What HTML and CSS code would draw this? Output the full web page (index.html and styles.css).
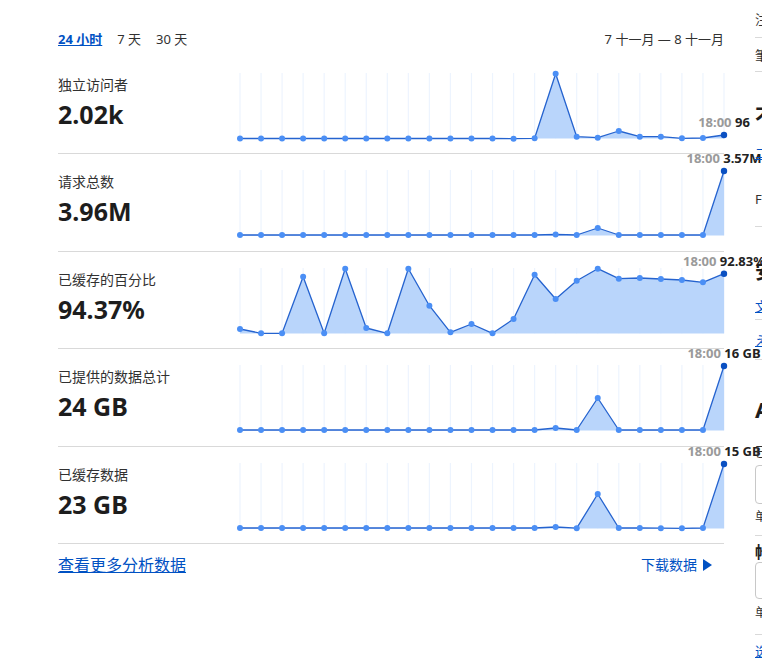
FILE: index.html
```html
<!DOCTYPE html>
<html lang="zh">
<head>
    <meta charset="UTF-8">
    <title>分析</title>
    <link rel="stylesheet" href="styles.css">
</head>
<body>
    <div class="page">
        <div class="main">
            <div class="range-bar">
                <div class="range-tabs">
                    <a class="tab active">24 小时</a>
                    <a class="tab">7 天</a>
                    <a class="tab">30 天</a>
                </div>
                <div class="range-dates">7 十一月 — 8 十一月</div>
            </div>

            <div class="stat-row">
                <div class="stat-text">
                    <div class="stat-label">独立访问者</div>
                    <div class="stat-value">2.02k</div>
                </div>
                <svg class="chart" id="chart0"></svg>
            </div>
            <div class="stat-row">
                <div class="stat-text">
                    <div class="stat-label">请求总数</div>
                    <div class="stat-value">3.96M</div>
                </div>
                <svg class="chart" id="chart1"></svg>
            </div>
            <div class="stat-row">
                <div class="stat-text">
                    <div class="stat-label">已缓存的百分比</div>
                    <div class="stat-value">94.37%</div>
                </div>
                <svg class="chart" id="chart2"></svg>
            </div>
            <div class="stat-row">
                <div class="stat-text">
                    <div class="stat-label">已提供的数据总计</div>
                    <div class="stat-value">24 GB</div>
                </div>
                <svg class="chart" id="chart3"></svg>
            </div>
            <div class="stat-row">
                <div class="stat-text">
                    <div class="stat-label">已缓存数据</div>
                    <div class="stat-value">23 GB</div>
                </div>
                <svg class="chart" id="chart4"></svg>
            </div>

            <div class="footer-bar">
                <a class="more-link">查看更多分析数据</a>
                <a class="download-link">下载数据 <span class="arrow"></span></a>
            </div>
        </div>

        <div class="sidebar">
            <div class="s-row first">注册与登录</div>
            <div class="s-row second">筆记与设置</div>
            <div class="s-card card-a">
                <h3 class="s-title">不可用模式</h3>
                <a class="s-link link-a">二级域名</a>
                <p class="s-text text-a">Free 计划</p>
            </div>
            <div class="s-card card-b">
                <h3 class="s-title">安全性</h3>
                <a class="s-link link-b">文档</a>
            </div>
            <div class="s-row third"><a class="s-link">え了解更多</a></div>
            <div class="s-card card-c">
                <h3 class="s-title big">API</h3>
                <div class="s-text label-c">已分配的区域 ID</div>
                <div class="s-input"></div>
                <div class="s-small">单击复制</div>
            </div>
            <div class="s-card card-d">
                <h4 class="s-subtitle">帐户 ID</h4>
                <div class="s-input short"></div>
                <div class="s-small">单击复制</div>
            </div>
            <div class="s-last"><a class="s-link">选择 API 令牌</a></div>
        </div>
    </div>

    <script>
        // 每个图表的点（相对 y 坐标，0 顶部，65.5 底部）
        var charts = [
            { label: '96', ys: [65.5,65.5,65.5,65.5,65.5,65.5,65.5,65.5,65.5,65.5,65.5,65.5,65.5,65.7,65.3,0.7,63.7,64.7,58,63.7,63.7,65.3,65,62] },
            { label: '3.57M', ys: [65,65,65,65,65,65,65,65,65,65,65,65,65,65,65,64.5,65,58,65,65,65,65,65,1] },
            { label: '92.83%', ys: [61,65.3,65.3,8.7,65.3,0.7,60,65.3,0.7,37.7,64.3,56,65.3,51,6.7,31,12.7,0.7,10.7,10,11,12,14.3,5.7] },
            { label: '16 GB', ys: [65,65,65,65,65,65,65,65,65,65,65,65,65,65,65,63,65,33,65,65,65,65,65,1] },
            { label: '15 GB', ys: [65,65,65,65,65,65,65,65,65,65,65,65,65,65,65,64,65.2,31,65,65,65.2,65.3,65,1] }
        ];

        var NS = 'http://www.w3.org/2000/svg';
        var BASE = 65.5;

        function el(name, attrs) {
            var node = document.createElementNS(NS, name);
            for (var k in attrs) node.setAttribute(k, attrs[k]);
            return node;
        }

        function drawChart(svg, data) {
            var step = 484 / 23;
            var pts = data.ys.map(function(y, i) { return [4 + i * step, y]; });

            pts.forEach(function(p) {
                svg.appendChild(el('line', { x1: p[0], y1: 0, x2: p[0], y2: BASE, 'class': 'grid' }));
            });

            var line = pts.map(function(p) { return p[0].toFixed(2) + ',' + p[1]; }).join(' ');
            var area = pts[0][0] + ',' + BASE + ' ' + line + ' ' + pts[pts.length - 1][0] + ',' + BASE;
            svg.appendChild(el('polygon', { points: area, 'class': 'area' }));
            svg.appendChild(el('polyline', { points: line, 'class': 'line' }));

            pts.forEach(function(p, i) {
                var last = i === pts.length - 1;
                svg.appendChild(el('circle', { cx: p[0], cy: p[1], r: last ? 3.2 : 3, 'class': last ? 'dot last' : 'dot' }));
            });

            var lp = pts[pts.length - 1];
            var text = el('text', { x: lp[0], y: lp[1] - 8, 'class': 'tip' });
            var t1 = el('tspan', { 'class': 'tip-time' });
            t1.textContent = '18:00';
            var t2 = el('tspan', { 'class': 'tip-value' });
            t2.textContent = ' ' + data.label;
            text.appendChild(t1);
            text.appendChild(t2);
            svg.appendChild(text);
        }

        charts.forEach(function(c, i) {
            drawChart(document.getElementById('chart' + i), c);
        });
    </script>
</body>
</html>
```

FILE: styles.css
```css
html, body {
    margin: 0;
    padding: 0;
    background: #fff;
    overflow: hidden;
}
body {
    font-family: 'Noto Sans', 'Noto Sans CJK SC', sans-serif;
    color: #313131;
    font-size: 13px;
}
a {
    cursor: pointer;
}
.page {
    display: flex;
    width: 1100px;
}
.main {
    width: 666px;
    margin-left: 58px;
    flex-shrink: 0;
}
.range-bar {
    display: flex;
    justify-content: space-between;
    align-items: center;
    padding-top: 30px;
    height: 26.5px;
    line-height: 18px;
}
.range-tabs {
    display: flex;
    gap: 15px;
    align-self: flex-start;
}
.tab {
    color: #313131;
}
.tab.active {
    color: #0051c3;
    font-weight: bold;
    text-decoration: underline;
}
.range-dates {
    align-self: flex-start;
    color: #313131;
}
.stat-row {
    display: grid;
    grid-template-columns: 178px 488px;
    padding: 16px 0 14.5px;
    border-bottom: 1px solid #d9d9d9;
}
.stat-label {
    margin-top: 3px;
    font-size: 14px;
    line-height: 18px;
    color: #313131;
}
.stat-value {
    margin-top: 5px;
    font-size: 25px;
    font-weight: bold;
    line-height: 30px;
    color: #1d1d1d;
}
.chart {
    width: 488px;
    height: 66px;
    overflow: visible;
    display: block;
}
.chart .grid {
    stroke: #edf4fe;
    stroke-width: 1.2;
}
.chart .area {
    fill: #b9d5fb;
}
.chart .line {
    fill: none;
    stroke: #2563cf;
    stroke-width: 1.3;
    stroke-linejoin: round;
}
.chart .dot {
    fill: #4b8ff5;
}
.chart .dot.last {
    fill: #0a50c2;
}
.chart .tip {
    font-family: 'Noto Sans', sans-serif;
    font-size: 13px;
    font-weight: bold;
    text-anchor: middle;
}
.chart .tip-time {
    fill: #9a9a9a;
}
.chart .tip-value {
    fill: #222;
}
.footer-bar {
    display: flex;
    justify-content: space-between;
    padding-top: 11px;
    line-height: 20px;
}
.more-link {
    font-size: 16px;
    color: #0051c3;
    text-decoration: underline;
}
.download-link {
    display: flex;
    align-items: center;
    gap: 6px;
    margin-right: 12px;
    color: #0051c3;
    font-size: 14px;
}
.arrow {
    width: 0;
    height: 0;
    border-top: 6.5px solid transparent;
    border-bottom: 6.5px solid transparent;
    border-left: 9px solid #0051c3;
}

/* 右侧栏 */
.sidebar {
    width: 260px;
    margin-left: 31px;
    flex-shrink: 0;
    font-size: 13px;
    color: #313131;
}
.s-row {
    display: flex;
    align-items: center;
    border-bottom: 1px solid #d9d9d9;
}
.s-row.first {
    height: 37px;
}
.s-row.second {
    height: 33px;
}
.s-row.third {
    height: 39px;
}
.s-card {
    border-bottom: 1px solid #d9d9d9;
}
.s-title {
    margin: 0;
    font-size: 20px;
    line-height: 28px;
    color: #1d1d1d;
}
.s-title.big {
    font-size: 22px;
}
.s-subtitle {
    margin: 0;
    font-size: 16px;
    line-height: 20px;
    color: #1d1d1d;
}
.s-link {
    display: block;
    color: #0051c3;
    text-decoration: underline;
    line-height: 20px;
}
.s-text {
    margin: 0;
    line-height: 20px;
}
.s-small {
    font-size: 12px;
    line-height: 18px;
}
.s-input {
    height: 37px;
    border: 1px solid #c8c8c8;
    border-radius: 4px;
    margin-top: 4px;
}
.s-input.short {
    height: 35px;
    margin-top: 0;
}
.card-a {
    padding: 31px 0 17px;
}
.link-a {
    margin-top: 12px;
}
.text-a {
    margin-top: 26px;
}
.card-b {
    padding: 31px 0 3px;
}
.link-b {
    margin-top: 10px;
}
.card-c {
    padding: 35px 0 9px;
}
.card-c .s-small {
    margin-top: 4px;
}
.label-c {
    margin-top: 18px;
}
.card-d {
    padding: 6px 0 12px;
}
.card-d .s-small {
    margin-top: 5px;
}
.s-last {
    padding-top: 6px;
}
```
